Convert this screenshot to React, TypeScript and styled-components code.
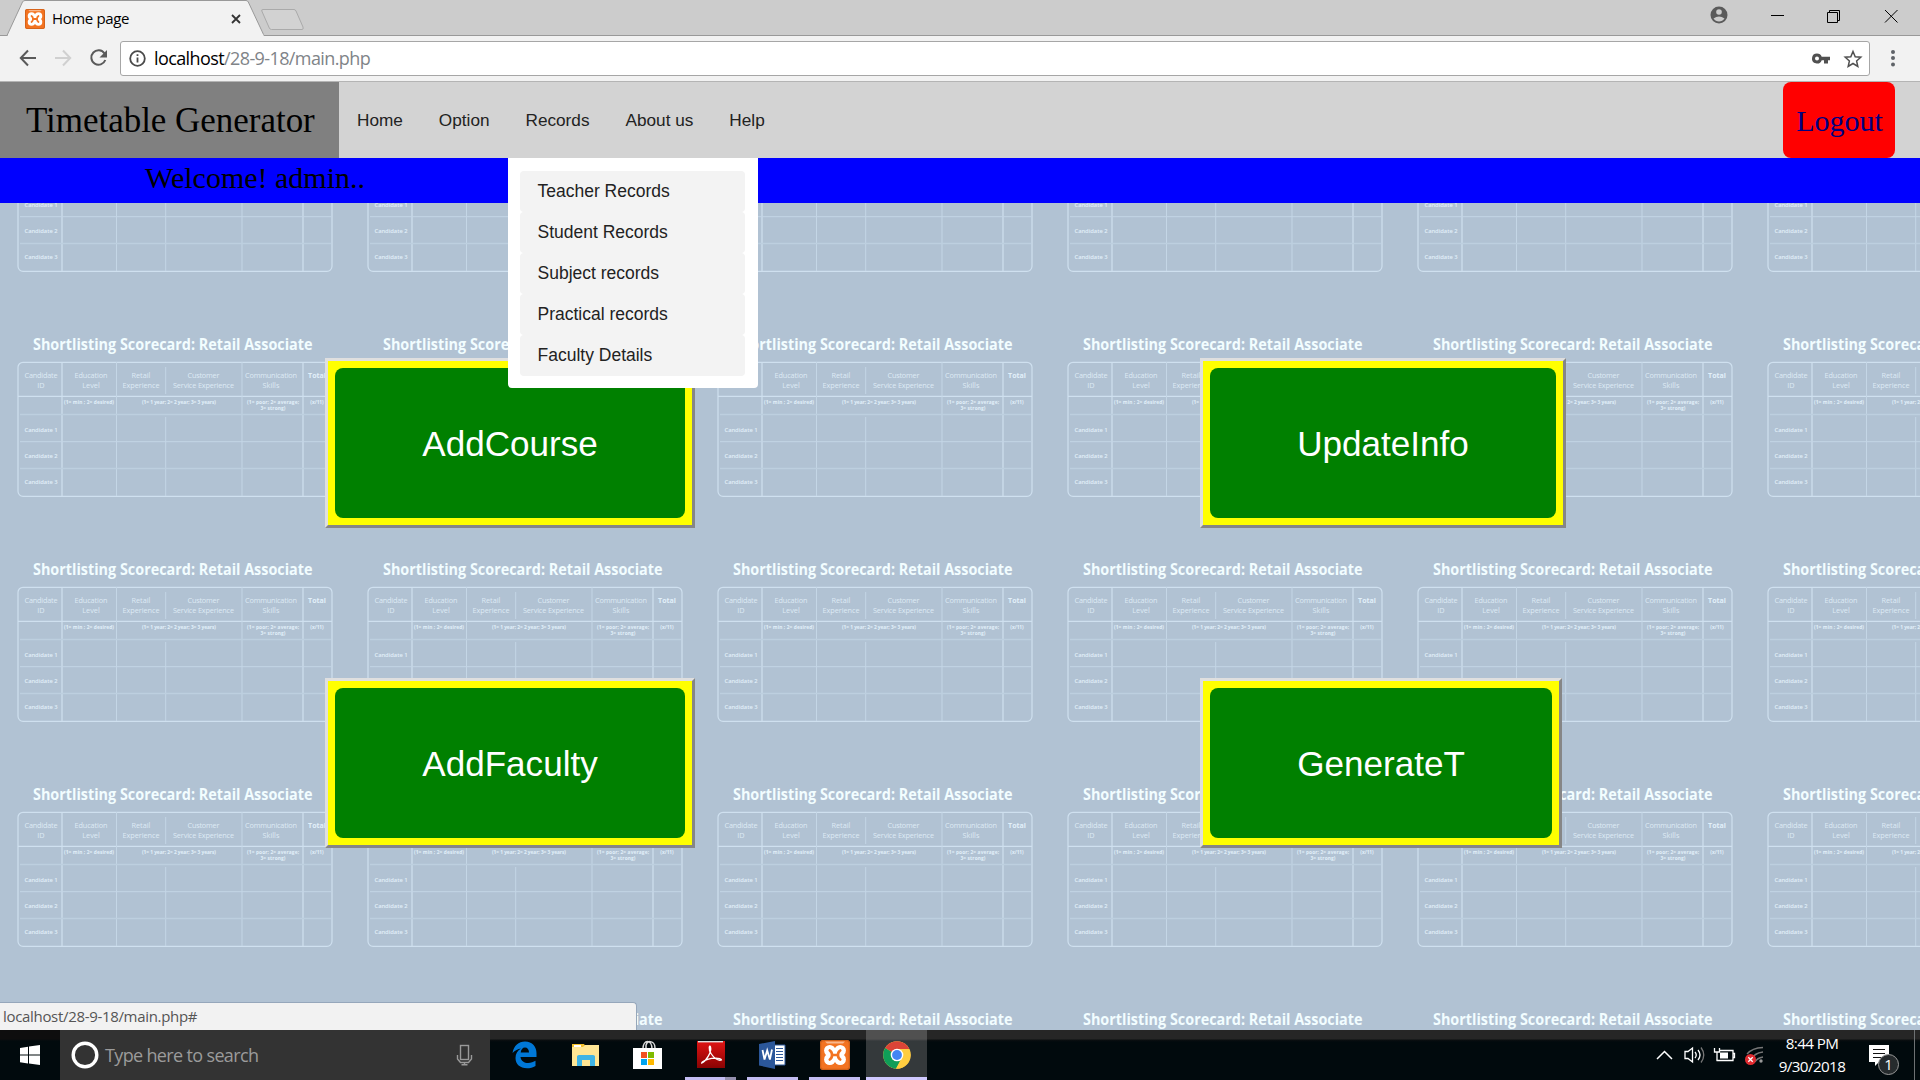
import React from 'react';
import styled, { createGlobalStyle } from 'styled-components';

const Global = createGlobalStyle`
  body { margin: 0; background: #b0c2d4; overflow: hidden; }
  * { box-sizing: border-box; }
  svg { display: block; flex: none; }
`;
const ui = `"Open Sans", "Noto Sans", sans-serif`;
const arial = `"Liberation Sans", Arial, sans-serif`;
const times = `"Liberation Serif", "Times New Roman", serif`;

const Screen = styled.div`
  width: 1920px; height: 1080px; display: flex; flex-direction: column; overflow: hidden;
`;
const TabStrip = styled.div`
  height: 36px; background: #cccccc; display: flex; position: relative; border-bottom: 1px solid #999;
`;
const Tab = styled.div`
  position: relative; width: 268px; height: 36px; display: flex; align-items: center; padding: 2px 0 0 25px; flex: none;
`;
const TabShape = styled.svg`
  position: absolute; left: 0; top: 0;
`;
const TabTitle = styled.span`
  position: relative; margin-left: 7px; width: 179px; font: 15px/20px ${ui}; letter-spacing: -0.38px; color: #000; white-space: nowrap; top: -1px;
`;
const Relative = styled.span`
  position: relative; display: block;
`;
const WindowControls = styled.div`
  margin-left: auto; display: flex; align-items: flex-start;
`;
const Toolbar = styled.div`
  height: 46px; background: #f2f2f2; border-bottom: 1px solid #b4b4b4; display: flex; align-items: center; padding: 0 19px 1px 18px;
`;
const Address = styled.div`
  flex: 1; height: 35px; margin: 1px 19px 0 11px; background: #fff; border: 1px solid #a6a6a6; border-radius: 3px;
  display: flex; align-items: center; padding: 0 6px 0 8px; font: 18px/24px ${ui};
`;
const Url = styled.span`
  margin-left: 8px; flex: 1; color: #808488; letter-spacing: -0.6px; white-space: nowrap; padding-bottom: 1px;
  b { font-weight: 400; color: #000; }
`;
const Nav = styled.nav`
  height: 76px; flex: none; background: #d3d3d3; display: flex; position: relative; padding-right: 25px;
`;
const Brand = styled.div`
  width: 339px; background: #808080; padding-left: 26px; font: 35px/78px ${times}; letter-spacing: -0.03px; color: #000; white-space: nowrap; height: 76px;
`;
const Menu = styled.div`
  display: flex; flex: 1;
`;
const MenuItem = styled.a`
  position: relative; padding: 0 18px; font: 17.2px/77px ${arial}; color: #222; white-space: nowrap; 
`;
const Dropdown = styled.div`
  position: absolute; z-index: 3; left: 0; top: 76px; width: 250px; height: 230px; padding: 13px 13px 12px 12px;
  background: #fff; border-radius: 0 0 4px 4px;
`;
const DropdownItem = styled.a`
  display: block; height: 41px; border-radius: 4px; background: #f3f3f3; padding-left: 18px; font: 17.5px/41px ${arial}; color: #222;
`;
const Logout = styled.button`
  width: 112px; height: 76px; border: 0; border-radius: 8px; background: #f00; color: #000080; font: 30px/34px ${times}; padding: 2px 0 0 1px;
`;
const Welcome = styled.div`
  height: 45px; flex: none; background: #00f; color: #000; font: 30px/39px ${times}; padding-left: 145px;
`;
const Content = styled.main`
  position: relative; height: 827px; flex: none; overflow: hidden; background: #b1c2d3; padding: 155px 0 0 325px;
`;
const Backdrop = styled.div`
  position: absolute; left: 0; top: -96px; width: 2100px; display: grid; grid-template-columns: repeat(6, 350px); grid-auto-rows: 225px;
`;
const Actions = styled.div`
  position: relative; display: grid; grid-template-columns: 875px auto; grid-auto-rows: 170px; row-gap: 150px; justify-items: start; justify-content: start;
`;
const ActionFrame = styled.div`
  border: 3px solid; border-color: #dfdfdf #868686 #868686 #dfdfdf; background: #ff0; padding: 7px;
`;
const ActionButton = styled.button<{ $w: number }>`
  display: block; width: ${p => p.$w}px; height: 150px; border: 0; border-radius: 8px; background: #008000; color: #fff; font: 35.1px/40px ${arial}; padding: 2px 0 0;
`;
const StatusBubble = styled.div`
  position: absolute; left: 0; bottom: 0; width: 637px; height: 28px; background: #f2f2f2; border: 1px solid #96a7bb; border-width: 1px 1px 0 0;
  border-radius: 0 4px 0 0; padding-left: 3px; font: 15px/27px ${ui}; letter-spacing: -0.32px; color: #555;
`;
const Taskbar = styled.footer`
  height: 50px; flex: none; display: flex; background: linear-gradient(#262626 0 9px, #0b0f10 10px, #010a0d 12px); color: #fff;
`;
const Start = styled.div`
  width: 60px; padding: 15px 0 0 20px; background: linear-gradient(#0e0e0e 0 9px, #010a0d 11px);
`;
const Search = styled.div`
  width: 430px; background: #333; display: flex; align-items: center; padding: 0 17px 0 10px; font: 18px/26px ${ui}; color: #9b9b9b;
  span { margin-left: 5px; flex: 1; letter-spacing: -0.65px; padding-top: 0; }
`;
const AppSlot = styled.div<{ $w: number; $bar?: string; $active?: boolean; $gap?: number }>`
  width: ${p => p.$w}px; height: 50px; display: flex; justify-content: center; align-items: center;
  background: ${p => (p.$active ? 'linear-gradient(#505050 0 9px, #34393b 11px)' : 'transparent')};
  border-bottom: 3px solid ${p => p.$bar || 'transparent'}; margin-right: ${p => p.$gap || 0}px;
`;
const AppIcon = styled.div`
  padding-top: 3px;
`;
const StackedEdge = styled.div`
  align-self: flex-end; width: 11px; height: 3px; background: #9490ae; margin: 0 11px 0 -11px;
`;
const Tray = styled.div`
  margin-left: auto; display: flex; align-items: flex-start; padding-right: 5px;
`;
const Clock = styled.div`
  width: 84px; text-align: center; font: 15.2px/23px ${ui}; letter-spacing: -0.6px; padding-top: 2px; white-space: nowrap; margin: 0 14px 0 2px;
`;
const ShowDesktop = styled.div`
  width: 1px; height: 50px; background: #6d7173; margin-left: 15px;
`;

const Xampp = ({ s }: { s: number }) => (
  <svg width={s} height={s} viewBox="0 0 30 30">
    <rect width="30" height="30" rx="3" fill="#f37321" />
    <rect x=".7" y=".7" width="28.6" height="28.6" rx="2.5" fill="none" stroke="#c65a16" />
    <path d="M5 1.500h20l-2 2H7z" fill="#f9b78c" />
    <g fill="#fff">
      <circle cx="9.800" cy="10.600" r="5.700" /><circle cx="20.200" cy="10.600" r="5.700" />
      <circle cx="9.800" cy="19.400" r="5.700" /><circle cx="20.200" cy="19.400" r="5.700" />
      <rect x="8" y="9" width="14" height="12" />
    </g>
    <path d="M9.800 10.500C12.800 12.500 12.800 17.500 9.800 19.500M20.200 10.500C17.200 12.500 17.200 17.500 20.200 19.500M12.500 15h5" fill="none" stroke="#f37321" strokeWidth="2.700" strokeLinecap="round" />
  </svg>
);

const Scorecard = () => (
  <svg width="350" height="225" viewBox="0 0 350 225" fontFamily={ui} textAnchor="middle" fill="#e2f0fa">
    <text x="33" y="17.500" fontSize="15.200" fontWeight="700" textAnchor="start" textLength="279.500" lengthAdjust="spacingAndGlyphs" fill="#f2fdff">Shortlisting Scorecard: Retail Associate</text>
    <g fill="none" stroke="#cfe0ef">
      <rect x="18" y="30.300" width="314" height="134" rx="5" strokeWidth="1.200" />
      <path d="M62 30V164M303 30V164M18 64.400H332" strokeWidth="1.200" />
      <path d="M116.500 30V164M165.700 35V62M165.700 85V164M242 30V164M20 109.700H331" stroke="#c4d6e6" />
      <path d="M20 82.500H331M20 136.500H331" stroke="#bdcfdf" strokeWidth="1.600" />
    </g>
    <g fontSize="7.300" opacity=".9">
      <text x="41" y="45.500" textLength="33">Candidate</text><text x="41" y="56">ID</text>
      <text x="91" y="45.500" textLength="33">Education</text><text x="91" y="56">Level</text>
      <text x="141" y="45.500">Retail</text><text x="141" y="56" textLength="37">Experience</text>
      <text x="203.500" y="45.500" textLength="32">Customer</text><text x="203.500" y="56" textLength="61">Service Experience</text>
      <text x="271" y="45.500" textLength="52">Communication</text><text x="271" y="56">Skills</text>
    </g>
    <text x="317" y="46" fontSize="7" fontWeight="700">Total</text>
    <g fontSize="4.800" fontWeight="700">
      <text x="89" y="71.500" textLength="50">(1= min ; 2= desired)</text>
      <text x="179" y="71.500" textLength="74">(1= 1 year; 2= 2 year; 3= 3 years)</text>
      <text x="273" y="71.500" textLength="52">(1= poor; 2= average;</text>
      <text x="273" y="78" textLength="25">3= strong)</text>
      <text x="317" y="71.500">(x/11)</text>
    </g>
    <g fontSize="5.800" fontWeight="600">
      <text x="41" y="99.600" textLength="33">Candidate 1</text>
      <text x="41" y="125.600" textLength="33">Candidate 2</text>
      <text x="41" y="151.800" textLength="33">Candidate 3</text>
    </g>
  </svg>
);

const records = ['Teacher Records', 'Student Records', 'Subject records', 'Practical records', 'Faculty Details'];
const actions: [string, number][] = [['AddCourse', 350], ['UpdateInfo', 346], ['AddFaculty', 350], ['GenerateT', 342]];

export default function App() {
  return (
    <Screen>
      <Global />
      <TabStrip>
        <Tab>
          <TabShape width="310" height="36">
            <path d="M0 35.500H7L22.500 2Q23.300.5 25 .5H246Q247.500.5 248.300 2L264 35.500" fill="#f2f2f2" stroke="#999" />
            <path d="M8 35.500H263.500" stroke="#f2f2f2" strokeWidth="2" />
            <path d="M263 9.500H294Q295.300 9.500 296 11L303 27Q303.800 29.500 302 29.500H271.500Q270 29.500 269.300 28L261.800 11Q261.200 9.500 263 9.500Z" fill="#d2d2d2" stroke="#aaa" />
          </TabShape>
          <Relative><Xampp s={20} /></Relative>
          <TabTitle>Home page</TabTitle>
          <Relative><svg width="10" height="10"><path d="M1 1l8 8M9 1l-8 8" stroke="#333" strokeWidth="1.800" /></svg></Relative>
        </Tab>
        <WindowControls>
          <svg width="220" height="35" fill="none" stroke="#000">
            <circle cx="19" cy="15" r="8.500" fill="#5a5a5a" stroke="none" />
            <circle cx="19" cy="12" r="2.800" fill="#ccc" stroke="none" />
            <path d="M13.500 18.500Q19 14.500 24.500 18.500Q22.500 21.500 19 21.500T13.500 18.500Z" fill="#ccc" stroke="none" />
            <path d="M71 15.500h13M127.500 12.500h10v10h-10zM129.500 12v-1.500h10v10h-2M185 10l12.500 12.500M197.500 10L185 22.500" />
          </svg>
        </WindowControls>
      </TabStrip>
      <Toolbar>
        <svg width="91" height="24" fill="none" stroke="#5a5a5a" strokeWidth="2">
          <path d="M18 12H3M10 4.500L2.800 12l7.200 7.500" />
          <path d="M37 12h15M45 4.500l7.200 7.500l-7.200 7.500" stroke="#d0d0d0" />
          <path d="M86.500 7.500A7.200 7.200 0 1 0 87.300 14" />
          <path d="M89 4v7.500h-7.500z" fill="#5a5a5a" stroke="none" />
        </svg>
        <Address>
          <svg width="17" height="17" fill="none" stroke="#4a4a4a" strokeWidth="1.800"><circle cx="8.500" cy="8.500" r="7.300" /><path d="M8.500 7.500v5M8.500 4.200v1.900" /></svg>
          <Url><b>localhost</b>/28-9-18/main.php</Url>
          <svg width="52" height="20">
            <path fillRule="evenodd" fill="#505050" d="M6 4.500a5 5 0 1 0 4.700 6.700H13V14.500h4V11.200h2V7.800H10.700A5 5 0 0 0 6 4.500zM6 7.500a2 2 0 1 1 0 4a2 2 0 0 1 0-4z" />
            <path d="M42 2.500l2.200 5.200 5.600.5-4.200 3.700 1.200 5.500L42 14.500l-4.800 2.900 1.200-5.500-4.200-3.700 5.600-.5z" fill="none" stroke="#505050" strokeWidth="1.500" />
          </svg>
        </Address>
        <svg width="12" height="20" fill="#5f6368"><circle cx="4" cy="4" r="2" /><circle cx="4" cy="10" r="2" /><circle cx="4" cy="16.500" r="2" /></svg>
      </Toolbar>
      <Nav>
        <Brand>Timetable Generator</Brand>
        <Menu>
          <MenuItem>Home</MenuItem>
          <MenuItem>Option</MenuItem>
          <MenuItem>Records
            <Dropdown>{records.map(r => <DropdownItem key={r}>{r}</DropdownItem>)}</Dropdown>
          </MenuItem>
          <MenuItem>About us</MenuItem>
          <MenuItem>Help</MenuItem>
        </Menu>
        <Logout>Logout</Logout>
      </Nav>
      <Welcome>Welcome! admin..</Welcome>
      <Content>
        <Backdrop>{Array.from({ length: 30 }, (_, i) => <Scorecard key={i} />)}</Backdrop>
        <Actions>
          {actions.map(([label, w]) => <ActionFrame key={label}><ActionButton $w={w}>{label}</ActionButton></ActionFrame>)}
        </Actions>
        <StatusBubble>localhost/28-9-18/main.php#</StatusBubble>
      </Content>
      <Taskbar>
        <Start>
          <svg width="20" height="20" fill="#fff"><path d="M0 3l8-1.200V9.500H0zM9 1.500L20 0v9.500H9zM0 10.500h8V18.400L0 17.200zM9 10.500h11V20L9 18.500z" /></svg>
        </Start>
        <Search>
          <svg width="30" height="30"><circle cx="15" cy="15" r="11.800" fill="none" stroke="#fff" strokeWidth="3.400" /></svg>
          <span>Type here to search</span>
          <svg width="17" height="22" fill="none" stroke="#999" strokeWidth="1.400"><rect x="4.500" y="1.500" width="8" height="14" /><path d="M1.500 11v4l3 3.500h8l3-3.500v-4M8.500 18.500v2M5.500 20.700h6" /></svg>
        </Search>
        <AppSlot $w={68}><AppIcon>
          <svg width="25" height="28" viewBox="0 0 25 28"><path d="M.5 12C2 4.500 6.500.5 13 .5C20.500.5 24.500 6 24.500 12V16H8.500C9 20 12.500 22 16 22C19 22 21.500 21 23.500 19.800V25C21 26.500 18 27.300 15 27.300C8 27.300 3.500 23 3.500 17C3.500 13 5.500 9.500 9 7.500C6 8 3 9.500.5 12zM8.700 11.500H17C17 8.500 15.500 6.500 13 6.500C10.500 6.500 9 8.500 8.700 11.500z" fill="#0078d7" /></svg>
        </AppIcon></AppSlot>
        <AppSlot $w={55}><AppIcon>
          <svg width="28" height="25"><path d="M0 1h12l2 3H0z" fill="#f3c12d" /><path d="M2 2h7v2H2z" fill="#fff" /><path d="M0 4h11l2-2h14v21H0z" fill="#ffe694" /><path d="M5 23V13.500Q5 12 7 12H21Q23 12 23 13.500V23H18V17H10V23z" fill="#3fb4e5" /></svg>
        </AppIcon></AppSlot>
        <AppSlot $w={69} $gap={3}><AppIcon>
          <svg width="29" height="30"><path d="M10 9C10-1 19-1 19 9M13 8C12-1 22 0 22 8" fill="none" stroke="#ddd" strokeWidth="1.500" /><path d="M0 8h29v21H0z" fill="#fff" /><path d="M8 12h6v6H8z" fill="#f25022" /><path d="M15 12h6v6h-6z" fill="#7fba00" /><path d="M8 19h6v6H8z" fill="#00a4ef" /><path d="M15 19h6v6h-6z" fill="#ffb900" /></svg>
        </AppIcon></AppSlot>
        <AppSlot $w={51} $bar="#c3bdf2"><AppIcon>
          <svg width="28" height="28"><defs><linearGradient id="pdf" x2="0" y2="1"><stop stopColor="#e01414" /><stop offset="1" stopColor="#8a0303" /></linearGradient></defs><rect width="28" height="27" fill="url(#pdf)" /><path d="M1 .7h25" stroke="#ddd" strokeWidth="1.400" /><path d="M5 22C9 20 15 11 13.500 6C12.500 3 11 8 14 12.500C17 17 21 20 24.500 19C25 16.500 13 16 6 20.500Q4 22 5 22.500" fill="none" stroke="#fff" strokeWidth="1.300" /></svg>
        </AppIcon></AppSlot>
        <StackedEdge />
        <AppSlot $w={51} $bar="#c3bdf2" $gap={11}><AppIcon>
          <svg width="27" height="28"><path d="M13 4h13v20H13z" fill="#fff" stroke="#2b579a" /><path d="M17 7.500h7M17 10.500h7M17 13.500h7M17 16.500h7M17 19.500h7" stroke="#2b579a" strokeWidth="1.200" /><path d="M0 3L16 0v28L0 24.500z" fill="#2b579a" /><path d="M3.500 9l2 9.500L8.200 9.500l2.700 9L13 8.500" fill="none" stroke="#fff" strokeWidth="1.800" /></svg>
        </AppIcon></AppSlot>
        <AppSlot $w={51} $bar="#c3bdf2" $gap={6}><AppIcon><Xampp s={30} /></AppIcon></AppSlot>
        <AppSlot $w={61} $bar="#cfc9ff" $active><AppIcon>
          <svg width="28" height="28" viewBox="0 0 28 28"><circle cx="14" cy="14" r="13.800" fill="#fc4" /><path d="M14 14L2.050 7.100A13.800 13.800 0 0 1 25.950 7.100L26 8H14z" fill="#db4437" /><path d="M14 14L2.050 7.100A13.800 13.800 0 0 0 13 27.800L19.500 17z" fill="#0f9d58" /><path d="M14 14h6L13 27.800A13.800 13.800 0 0 0 26 8H14z" fill="#ffcd40" /><circle cx="14" cy="14" r="6.300" fill="#fff" /><circle cx="14" cy="14" r="4.900" fill="#4285f4" /></svg>
        </AppIcon></AppSlot>
        <Tray>
          <svg width="112" height="50" fill="none" stroke="#fff" strokeWidth="1.300">
            <path d="M1 29l7.500-7.500L16 29" strokeWidth="1.500" />
            <path d="M29 21.500h3l4.500-3.500v14l-4.500-3.500h-3zM39 22q2.500 3 0 6M42 20q4 5 0 10" /><path d="M45 17.500q5.500 7.500 0 15" stroke="#777" />
            <path d="M63 20.500h14v10H63M77 23.500h1.500v4H77M60.500 30.500h4" /><path d="M64 22.500h8v6h-8z" fill="#fff" stroke="none" /><path d="M58.500 18v4h5v-4M61 22v4M61 25v5.500" />
            <path d="M91 24Q96 18 107 17.500M95 30Q98 23 107 22M99 32Q101 28 107 27" stroke="#777" /><circle cx="105" cy="31" r="1.700" fill="#999" stroke="none" />
            <circle cx="94.500" cy="29.500" r="5.500" fill="#e02b30" stroke="none" /><path d="M92.300 27.300l4.400 4.400M96.700 27.300l-4.400 4.400" />
          </svg>
          <Clock>8:44 PM<br />9/30/2018</Clock>
          <svg width="31" height="50">
            <path d="M1 15h20v17h-10l-4 4v-4H1z" fill="#fff" /><path d="M5 19.500h12M5 23.500h12M5 27.500h9" stroke="#111" strokeWidth="1.200" />
            <circle cx="20.500" cy="34.500" r="10" fill="#262b2d" stroke="#999" /><text x="20.500" y="40" fontSize="15" textAnchor="middle" fontFamily={ui} fill="#fff">1</text>
          </svg>
          <ShowDesktop />
        </Tray>
      </Taskbar>
    </Screen>
  );
}
